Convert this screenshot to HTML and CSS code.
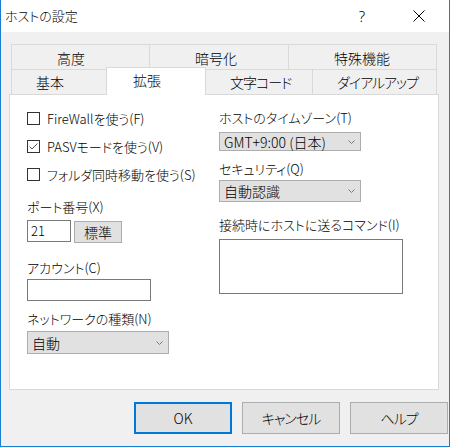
FILE: index.html
```html
<!DOCTYPE html>
<html lang="ja">
<head>
<meta charset="utf-8">
<title>ホストの設定</title>
<link rel="stylesheet" href="styles.css">
</head>
<body>
<div class="window">
  <div class="titlebar">
    <span class="title">ホストの設定</span>
    <span class="help">?</span>
    <span class="close"><svg width="12" height="12" viewBox="0 0 12 12"><path d="M0.5 0.5 L11.5 11.5 M11.5 0.5 L0.5 11.5" stroke="#000" stroke-width="1" fill="none"/></svg></span>
  </div>
  <div class="content">
    <div class="tabctl">
      <div class="tabrow row1">
        <div class="tab w138">高度</div>
        <div class="tab w139">暗号化</div>
        <div class="tab w149 last">特殊機能</div>
      </div>
      <div class="tabrow row2">
        <div class="tab w95">基本</div>
        <div class="tab sel">拡張</div>
        <div class="tab w106 noleft">文字コード</div>
        <div class="tab w125 last">ダイアルアップ</div>
      </div>
      <div class="panel">
        <div class="col leftcol">
          <label class="check"><span class="box"></span><span>FireWallを使う(F)</span></label>
          <label class="check"><span class="box"><svg width="11" height="11" viewBox="0 0 11 11"><path d="M1.5 5.5 L4 8 L9.5 2.5" stroke="#555" stroke-width="1" fill="none"/></svg></span><span>PASVモードを使う(V)</span></label>
          <label class="check"><span class="box"></span><span>フォルダ同時移動を使う(S)</span></label>
          <div class="lbl lbl-port">ポート番号(X)</div>
          <div class="port-row">
            <div class="input port">21</div>
            <div class="btn std">標準</div>
          </div>
          <div class="lbl lbl-account">アカウント(C)</div>
          <div class="input account"></div>
          <div class="lbl lbl-net">ネットワークの種類(N)</div>
          <div class="combo net"><span>自動</span><svg width="7" height="4" viewBox="0 0 7 4"><path d="M0.5 0.5 L3.5 3.5 L6.5 0.5" stroke="#7a7a7a" fill="none"/></svg></div>
        </div>
        <div class="col rightcol">
          <div class="lbl">ホストのタイムゾーン(T)</div>
          <div class="combo tz"><span>GMT+9:00 (日本)</span><svg width="7" height="4" viewBox="0 0 7 4"><path d="M0.5 0.5 L3.5 3.5 L6.5 0.5" stroke="#7a7a7a" fill="none"/></svg></div>
          <div class="lbl lbl-sec">セキュリティ(Q)</div>
          <div class="combo sec"><span>自動認識</span><svg width="7" height="4" viewBox="0 0 7 4"><path d="M0.5 0.5 L3.5 3.5 L6.5 0.5" stroke="#7a7a7a" fill="none"/></svg></div>
          <div class="lbl lbl-cmd">接続時にホストに送るコマンド(I)</div>
          <div class="input cmd"></div>
        </div>
      </div>
    </div>
    <div class="buttons">
      <div class="btn big def">OK</div>
      <div class="btn big kana">キャンセル</div>
      <div class="btn big kana">ヘルプ</div>
    </div>
  </div>
</div>
</body>
</html>
```

FILE: styles.css
```css
* { box-sizing: border-box; }
html, body { margin: 0; padding: 0; }
body {
  font-family: "Noto Sans CJK JP", sans-serif;
  font-weight: 300;
  font-feature-settings: "palt";
  color: #000;
  background: #fff;
}
.window {
  width: 450px;
  height: 447px;
  border: 1px solid #1a7ed5;
  border-top: none;
  background: #f0f0f0;
  display: flex;
  flex-direction: column;
}
.titlebar {
  height: 32px;
  background: #fff;
  display: flex;
  align-items: center;
  padding-left: 4px;
}
.title {
  flex: 1;
  font-size: 13px;
  line-height: 16px;
}
.help {
  font-family: "Noto Sans", sans-serif;
  font-size: 15px;
  line-height: 16px;
  width: 10px;
  text-align: center;
  margin-right: 46px;
}
.close { display: flex; margin-right: 24px; }
.content {
  flex: 1;
  padding: 12px 0 0 8px;
}
.tabctl { width: 430px; }
.tabrow {
  display: flex;
  padding: 0 2px;
  align-items: flex-end;
}
.tab {
  height: 25px;
  border-top: 1px solid #d9d9d9;
  border-left: 1px solid #d9d9d9;
  background: #f0f0f0;
  font-size: 14px;
  white-space: nowrap;
}
.row1 .tab { padding: 4px 0 0 45px; line-height: 18px; }
.row2 .tab { padding: 3px 0 0 24px; line-height: 18px; }
.row2 .tab.w106, .row2 .tab.w125 { letter-spacing: -1px; }
.tab.last { border-right: 1px solid #d9d9d9; }
.tab.noleft { border-left: none; }
.w138 { width: 138px; }
.w139 { width: 139px; }
.w149 { width: 149px; }
.w95 { width: 95px; }
.w106 { width: 106px; }
.w125 { width: 125px; }
.row2 .tab.sel {
  width: 100px;
  height: 28px;
  margin-top: -2px;
  margin-bottom: -1px;
  background: #fff;
  border-right: 1px solid #d9d9d9;
  position: relative;
  z-index: 2;
  padding: 3px 0 0 26px;
}
.panel {
  height: 296px;
  background: #fff;
  border: 1px solid #d9d9d9;
  display: flex;
  padding-left: 17px;
}
.lbl {
  font-size: 13px;
  line-height: 16px;
  white-space: nowrap;
}
.leftcol { width: 192px; padding-top: 9px; }
.rightcol { padding-top: 15px; }
.check {
  display: flex;
  align-items: center;
  height: 28px;
  gap: 7px;
  font-size: 13px;
  white-space: nowrap;
}
.box {
  width: 13px;
  height: 13px;
  border: 1px solid #333;
  background: #fff;
  display: flex;
}
.lbl-port { margin-top: 11px; }
.port-row { display: flex; margin-top: 5px; gap: 3px; }
.input {
  border: 1px solid #7a7a7a;
  background: #fff;
  height: 22px;
}
.port { width: 44px; font-size: 13px; line-height: 20px; padding-left: 3px; }
.btn {
  background: #e1e1e1;
  border: 1px solid #adadad;
  display: flex;
  align-items: center;
  justify-content: center;
  font-size: 14px;
}
.kana { letter-spacing: -1px; }
.std { width: 48px; height: 22px; margin-top: 1px; }
.lbl-account { margin-top: 17px; }
.account { width: 124px; margin-top: 3px; }
.lbl-net { margin-top: 10px; }
.combo {
  background: #e1e1e1;
  border: 1px solid #adadad;
  display: flex;
  align-items: center;
  justify-content: space-between;
  padding: 0 5px 0 4px;
  font-size: 14px;
  white-space: nowrap;
}
.net { width: 142px; height: 23px; margin-top: 4px; }
.tz { width: 142px; height: 19px; margin-top: 6px; }
.sec { width: 142px; height: 22px; margin-top: 3px; }
.lbl-sec { margin-top: 10px; }
.lbl-cmd { margin-top: 15px; }
.cmd { width: 184px; height: 55px; margin-top: 6px; }
.buttons {
  display: flex;
  justify-content: flex-end;
  gap: 10px;
  margin-top: 12px;
  padding-right: 1px;
}
.big { width: 98px; height: 32px; }
.def { border: 2px solid #0078d7; }
```
